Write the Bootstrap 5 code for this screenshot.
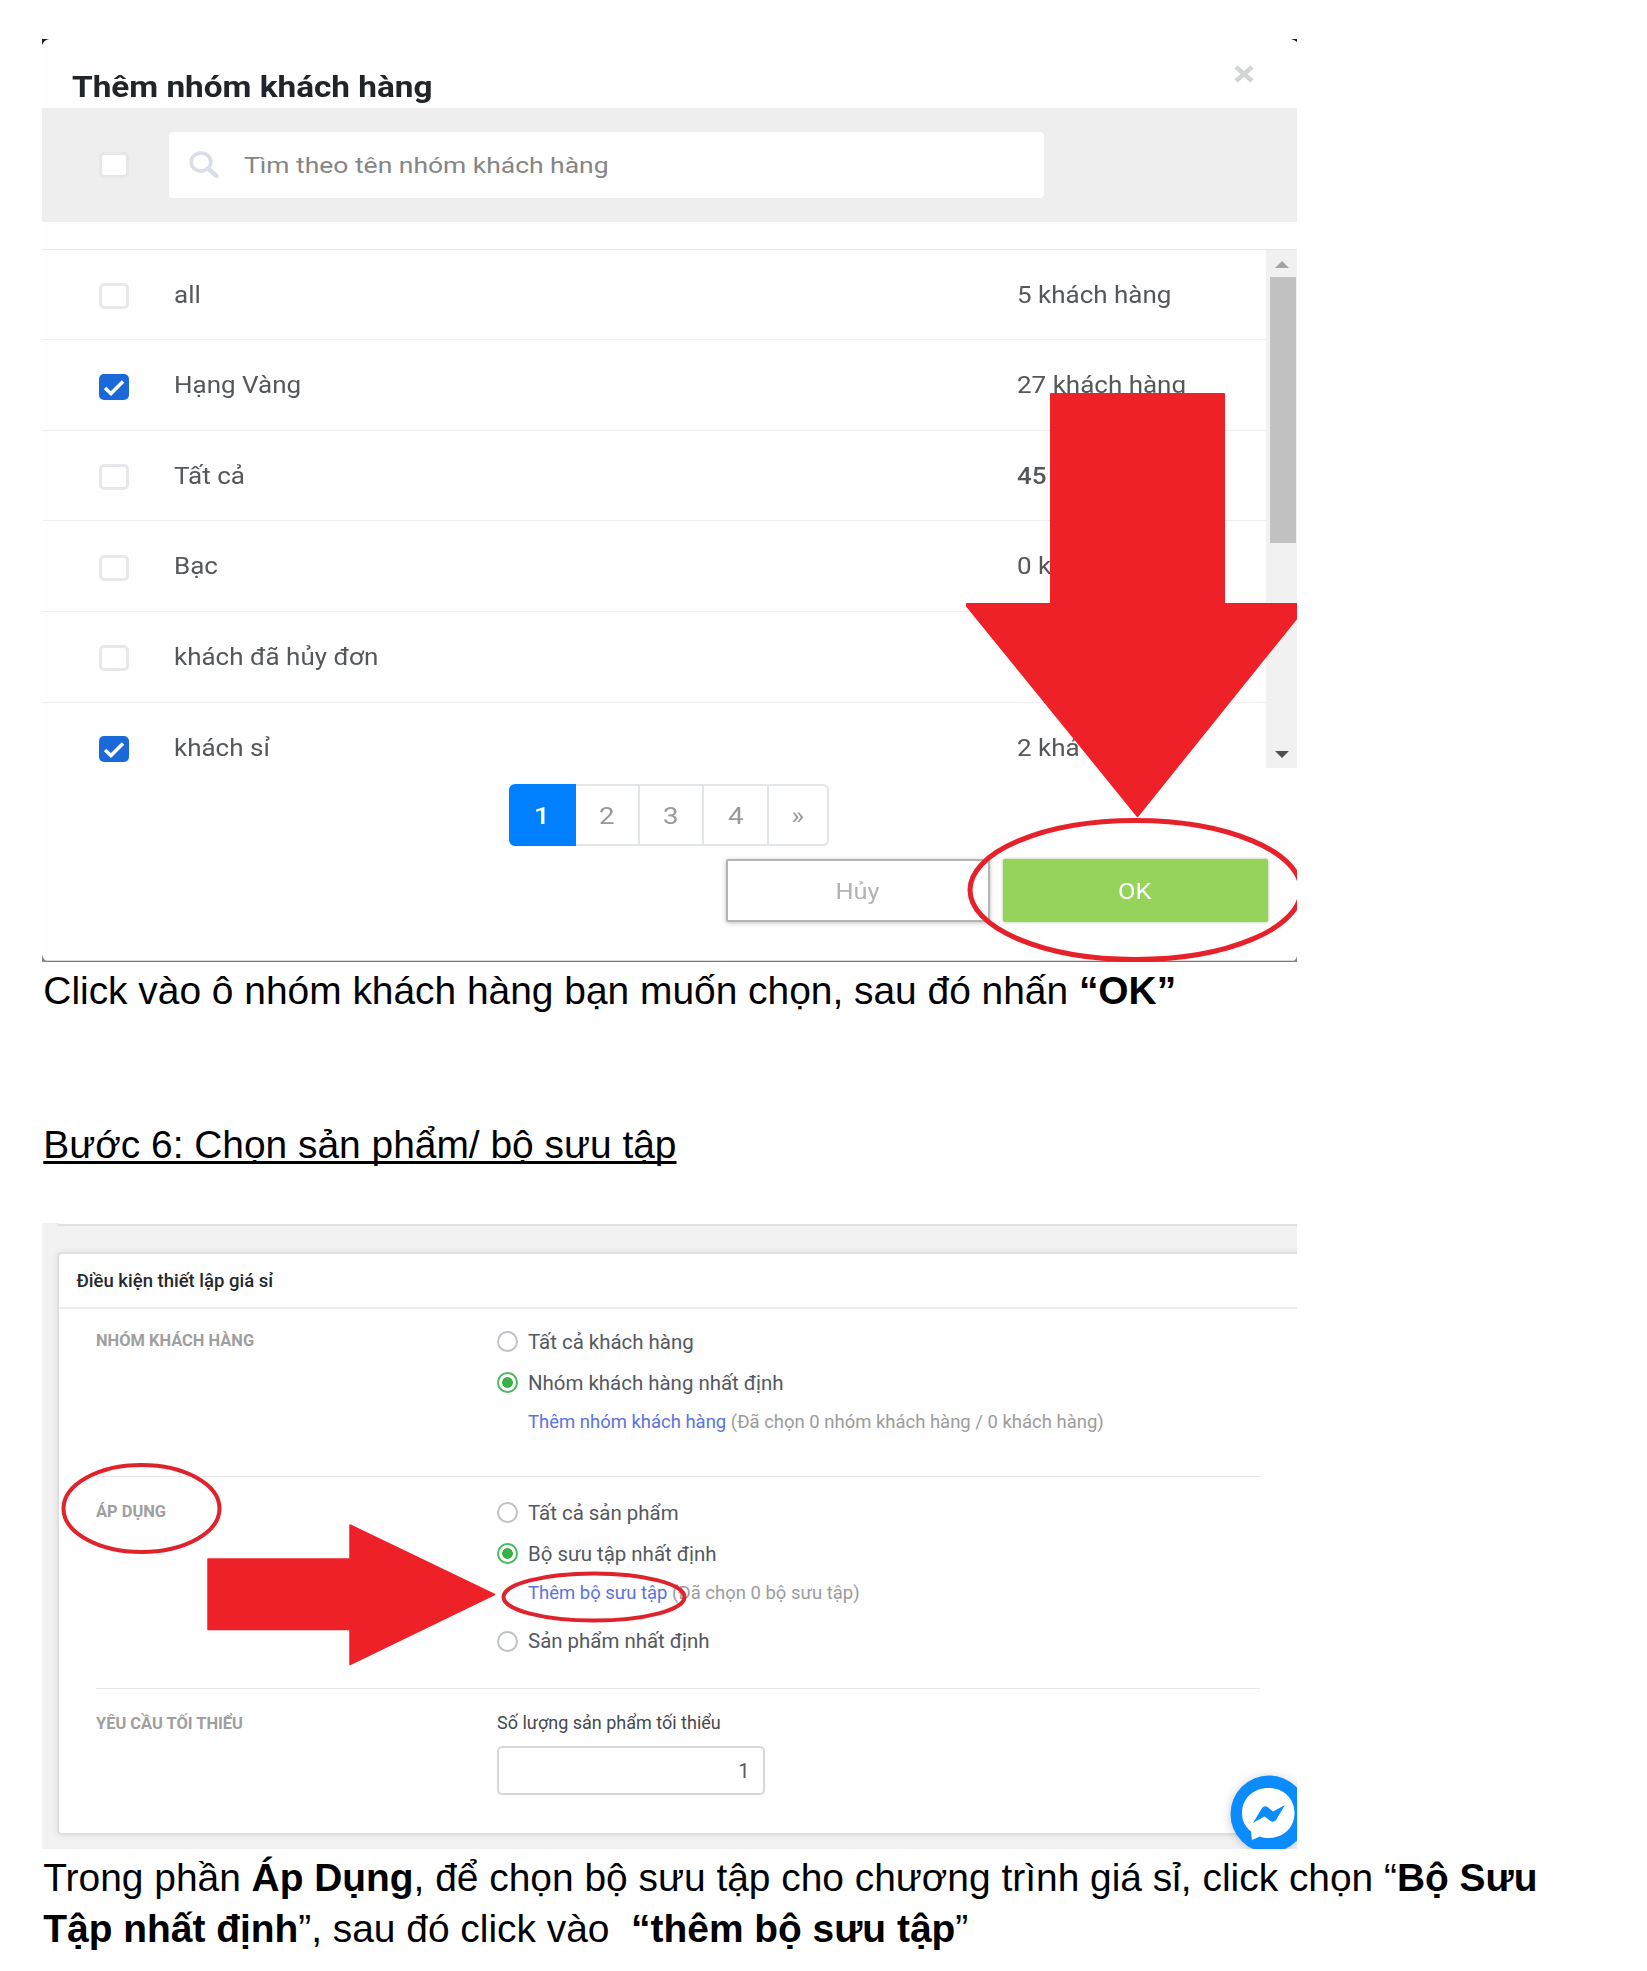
<!DOCTYPE html>
<html lang="vi">
<head>
<meta charset="utf-8">
<meta name="viewport" content="width=device-width, initial-scale=1">
<title>Thêm nhóm khách hàng</title>
<link href="https://cdn.jsdelivr.net/npm/bootstrap@5.3.0/dist/css/bootstrap.min.css" rel="stylesheet">
<style>
body{background:#fff;color:#000;font-family:"Liberation Sans",Arial,sans-serif;height:1971px;overflow:hidden}
.doc{padding:38px 0 0 42px}
.doc-text{font-size:38.9px;line-height:51.4px;padding-left:1.3px;white-space:nowrap}
.shot{position:relative;width:1255px;overflow:hidden;font-family:Roboto,sans-serif}
.overlay{position:absolute;inset:0;width:100%;height:100%;pointer-events:none}
.stretch{display:inline-block;transform:scaleX(1.13);transform-origin:0 50%;white-space:nowrap}
.stretch-c{transform-origin:50% 50%}

.dlg{height:924px;color:#55585b;font-size:23px;line-height:30px;background:#fefefe}
.dlg-head{height:70px;padding:34px 43px 0 29.5px}
.dlg-title{font-size:28.8px;font-weight:700;color:#212529;transform:scaleX(1.157)}
.dlg-close{width:20px;height:18px;margin-top:-7px}
.dlg-search{height:113.7px;background:#eeeeef;padding-left:57px}
.tick{width:30px;height:26px;border:3px solid #e6e8ec;border-radius:5px;background:#fff;flex:none}
.tick.on{background:#1b69d8;border:0}
.dlg-search .tick{margin-right:40px;border-color:#e7e7e9}
.tick svg{display:block;width:30px;height:26px}
.search-box{width:874.5px;height:65.4px;background:#fff;border-radius:4px;padding-left:20px;color:#858585;font-size:22.8px}
.search-box svg{width:30px;height:27px;margin-right:25px}
.search-box .stretch{transform:translateY(.6px) scaleX(1.16)}
.dlg-list{margin-top:27.6px;height:518.4px;overflow:hidden;border-top:1.5px solid #e6e6e6}
.dlg-row{height:90.6px;padding:2px 0 0 57px;border-bottom:1.5px solid #efefef}
.dlg-row:first-child{height:90px}
.dlg-row .tick{margin:1px 45.2px 0 0}
.dlg-row .who{width:842.5px}
.bar-track{width:31px;background:#f1f1f1;flex:none}
.bar-track svg{display:block;width:31px;height:27px}
.bar-thumb{height:265.5px;background:#c1c1c1;margin:0 1px 0 4px}
.pager{margin:16.2px 0 0 467px;height:62px;--bs-pagination-border-radius:6px}
.pager .page-link{height:62px;line-height:59px;padding:0;text-align:center;font-size:24.5px;color:#999;background:#fff;border:2px solid #e2e6e9;box-sizing:border-box}
.pager .page-item:not(:first-child) .page-link{margin-left:-2px}
.pager .active .page-link{background:#0080ff;border-color:#0080ff;color:#fff;font-weight:500;position:relative;z-index:1}
.pg1{width:66.5px}.pg3{width:66px}.pg4{width:67px}.pg5{width:62px}
.pg2{width:66.5px}
.dlg-foot{margin-top:13.2px;padding-left:684px;gap:13px}
.dlg-foot .btn{height:63px;border-radius:2px;font-size:22.5px;line-height:31px;padding:1px 0 0;font-family:Roboto,sans-serif}
.btn-huy{width:263.5px;border:2.5px solid #b4b4b6;color:#b3b3b3;background:#fff;box-shadow:0 1px 4px rgba(0,0,0,.25)}
.btn-ok{width:265.5px;border:0;color:#fff;background:#96d35a;box-shadow:0 0 3px rgba(90,140,50,.55)}
.cap-1{margin-top:3px}
.cap-2{margin-top:102.6px;text-decoration:underline;text-decoration-thickness:2.5px;text-underline-offset:3px;text-decoration-skip-ink:none}
.cap-3{margin-top:3.1px}

.setup{height:626px;margin-top:52.4px;background:#f2f2f2;padding:0 0 0 15px;color:#54595f;font-size:20.45px;line-height:30px}
.prev-card{height:3px;background:#fefefe;border-bottom:2px solid #dfe0e1;border-left:1px solid #dfe0e1;border-radius:0 0 0 4px}
.rule-card{margin-top:26.5px;height:582.5px;width:1260px;background:#fefefe;border:2px solid #dedfe1;border-radius:5px 0 0 5px;box-shadow:0 0 6px rgba(0,0,0,.09)}
.rule-title{height:55px;line-height:55px;padding-left:17.5px;font-size:18.5px;font-weight:500;color:#25292d;border-bottom:2px solid #ededee}
.rule-part{margin:0 55px 0 37px;border-bottom:1.5px solid #e8e8e8;display:flex}
.rule-part.p1{height:168px;padding-top:12px}
.rule-part.p2{height:212px;padding-top:15px}
.rule-part.p3{height:140px;padding-top:15px;border:0}
.rule-name{width:401px;flex:none;font-size:16.45px;font-weight:700;color:#9f9f9f;line-height:39px}
.opt{height:41px;display:flex;align-items:center}
.opt-last{margin-top:6.5px}
.dot{width:21px;height:21px;border:2px solid #bfc3c7;border-radius:50%;margin-right:10px;background:#fff}
.dot.on{border-color:#4dba62;background:radial-gradient(circle,#37b24a 5px,#fff 5.7px)}
.sub-opt{height:40px;line-height:39px;padding-left:31px;font-size:18.48px;color:#9c9c9c}
.sub-opt a{color:#5b73df;text-decoration:none}
.qty-name{font-size:18px;line-height:38px;color:#44494e}
.qty{margin-top:3.5px;width:267.5px;height:49px;border:2px solid #d6d9dc;border-radius:5px;text-align:right;padding-right:13px;line-height:46px;font-size:20px}
</style>
</head>
<body>
<main class="doc">
  <section class="shot dlg">
    <div class="dlg-head d-flex justify-content-between align-items-start">
      <span class="stretch dlg-title">Thêm nhóm khách hàng</span>
      <svg class="dlg-close" viewBox="0 0 20 18"><path d="M2 2 18 16M18 2 2 16" stroke="#d3d4d6" stroke-width="4.4"/></svg>
    </div>
    <div class="dlg-search d-flex align-items-center">
      <span class="tick"></span>
      <div class="search-box d-flex align-items-center">
        <svg viewBox="0 0 30 27"><ellipse cx="12" cy="11" rx="9.8" ry="9" fill="none" stroke="#dbdee8" stroke-width="3.6"/><path d="M19 17.500 27.500 25" stroke="#dbdee8" stroke-width="4.500" stroke-linecap="round"/></svg>
        <span class="stretch">Tìm theo tên nhóm khách hàng</span>
      </div>
    </div>
    <div class="dlg-list d-flex">
      <div class="flex-grow-1">
        <div class="dlg-row d-flex align-items-center"><span class="tick"></span><span class="who"><span class="stretch">all</span></span><span class="stretch">5 khách hàng</span></div>
        <div class="dlg-row d-flex align-items-center"><span class="tick on"><svg viewBox="0 0 30 26"><path d="M6 14 12 19.500 24 7.500" fill="none" stroke="#fff" stroke-width="3.500"/></svg></span><span class="who"><span class="stretch">Hạng Vàng</span></span><span class="stretch">27 khách hàng</span></div>
        <div class="dlg-row d-flex align-items-center"><span class="tick"></span><span class="who"><span class="stretch">Tất cả</span></span><span class="stretch fw-medium">45</span></div>
        <div class="dlg-row d-flex align-items-center"><span class="tick"></span><span class="who"><span class="stretch">Bạc</span></span><span class="stretch">0 k</span></div>
        <div class="dlg-row d-flex align-items-center"><span class="tick"></span><span class="who"><span class="stretch">khách đã hủy đơn</span></span></div>
        <div class="dlg-row d-flex align-items-center border-0"><span class="tick on"><svg viewBox="0 0 30 26"><path d="M6 14 12 19.500 24 7.500" fill="none" stroke="#fff" stroke-width="3.500"/></svg></span><span class="who"><span class="stretch">khách sỉ</span></span><span class="stretch">2 khá</span></div>
      </div>
      <div class="bar-track d-flex flex-column">
        <svg viewBox="0 0 31 27"><path d="M9 18 16 11 23 18Z" fill="#a3a3a3"/></svg>
        <div class="bar-thumb"></div>
        <svg class="mt-auto" viewBox="0 0 31 27"><path d="M9 10 16 17 23 10Z" fill="#505050"/></svg>
      </div>
    </div>
    <ul class="pagination pager">
      <li class="page-item active"><span class="page-link pg1"><span class="stretch stretch-c">1</span></span></li>
      <li class="page-item"><span class="page-link pg2"><span class="stretch stretch-c">2</span></span></li>
      <li class="page-item"><span class="page-link pg3"><span class="stretch stretch-c">3</span></span></li>
      <li class="page-item"><span class="page-link pg4"><span class="stretch stretch-c">4</span></span></li>
      <li class="page-item"><span class="page-link pg5"><span class="stretch stretch-c">»</span></span></li>
    </ul>
    <div class="dlg-foot d-flex">
      <button class="btn btn-huy"><span class="stretch stretch-c">Hủy</span></button>
      <button class="btn btn-ok"><span class="stretch stretch-c">OK</span></button>
    </div>
    <svg class="overlay" viewBox="0 0 1255 924">
      <path d="M0 923.400H1255" stroke="#777" stroke-width="1.300"/>
      <path d="M0 916Q1 923 8 924H0ZM1255 918Q1254 923 1249 924H1255Z" fill="#888"/>
      <path d="M0 7V1H7Q2 2 0 7ZM1249 1H1255V4Q1253 2 1249 1Z" fill="#171a2e"/>
      <path d="M1009 356H1182V566H1266L1095.500 778 925 568V566H1009Z" fill="#ee2129" stroke="#ee2129" stroke-width="2" stroke-linejoin="round"/>
      <ellipse cx="1093.500" cy="852" rx="165.500" ry="69.500" fill="none" stroke="#e6212a" stroke-width="5"/>
    </svg>
  </section>

  <div class="doc-text cap-1">Click vào ô nhóm khách hàng bạn muốn chọn, sau đó nhấn <b>“OK”</b></div>
  <div class="doc-text cap-2">Bước 6: Chọn sản phẩm/ bộ sưu tập</div>

  <section class="shot setup">
    <div class="prev-card"></div>
    <div class="rule-card">
      <div class="rule-title">Điều kiện thiết lập giá sỉ</div>
      <div class="rule-part p1">
        <div class="rule-name">NHÓM KHÁCH HÀNG</div>
        <div>
          <div class="opt"><span class="dot"></span>Tất cả khách hàng</div>
          <div class="opt"><span class="dot on"></span>Nhóm khách hàng nhất định</div>
          <div class="sub-opt"><a href="#">Thêm nhóm khách hàng</a> (Đã chọn 0 nhóm khách hàng / 0 khách hàng)</div>
        </div>
      </div>
      <div class="rule-part p2">
        <div class="rule-name">ÁP DỤNG</div>
        <div>
          <div class="opt"><span class="dot"></span>Tất cả sản phẩm</div>
          <div class="opt"><span class="dot on"></span>Bộ sưu tập nhất định</div>
          <div class="sub-opt"><a href="#">Thêm bộ sưu tập</a> (Đã chọn 0 bộ sưu tập)</div>
          <div class="opt opt-last"><span class="dot"></span>Sản phẩm nhất định</div>
        </div>
      </div>
      <div class="rule-part p3">
        <div class="rule-name">YÊU CẦU TỐI THIỂU</div>
        <div>
          <div class="qty-name">Số lượng sản phẩm tối thiểu</div>
          <div class="qty">1</div>
        </div>
      </div>
    </div>
    <svg class="overlay" viewBox="0 0 1255 626">
      <defs><filter id="soft" x="-30%" y="-30%" width="160%" height="160%"><feGaussianBlur stdDeviation="5"/></filter></defs>
      <circle cx="1227" cy="592" r="39" fill="#000" opacity=".18" filter="url(#soft)"/>
      <circle cx="1227" cy="591" r="38.500" fill="#0a8cff"/>
      <path d="M1226.500 565C1211.500 565 1200 575.500 1200 590 1200 598 1203.500 604 1209 608.500L1210 617 1218 613.500C1220.500 614.500 1223.500 615 1226.500 615 1241.500 615 1252.500 604.500 1252.500 590S1241.500 565 1226.500 565Z" fill="#fff"/>
      <path d="M1211 600 1220 585Q1222.500 582 1225.500 584L1231 588.500 1243 582 1234 597Q1231.500 600 1228.500 598L1222.500 593.500Z" fill="#0a8cff"/>
      <ellipse cx="99.500" cy="285.500" rx="78" ry="43.500" fill="none" stroke="#df222b" stroke-width="4"/>
      <ellipse cx="552" cy="374" rx="90.500" ry="23.500" fill="none" stroke="#df222b" stroke-width="4"/>
      <path d="M166 336H308V302L452.500 371.500 308 441.500V406.500H166Z" fill="#ee2129" stroke="#ee2129" stroke-width="1.500" stroke-linejoin="round"/>
    </svg>
  </section>

  <div class="doc-text cap-3">Trong phần <b>Áp Dụng</b>, để chọn bộ sưu tập cho chương trình giá sỉ, click chọn “<b>Bộ Sưu</b><br><b>Tập nhất định</b>”, sau đó click vào&nbsp; <b>“thêm bộ sưu tập</b>”</div>
</main>
<script src="https://cdn.jsdelivr.net/npm/bootstrap@5.3.0/dist/js/bootstrap.bundle.min.js"></script>
</body>
</html>
